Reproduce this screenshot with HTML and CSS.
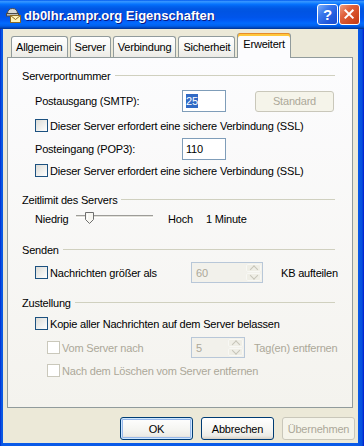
FILE: index.html
```html
<!DOCTYPE html>
<html lang="de">
<head>
<meta charset="utf-8">
<title>db0lhr.ampr.org Eigenschaften</title>
<link rel="stylesheet" href="styles.css">
</head>
<body>
<div class="window">
  <div class="titlebar">
    <svg class="ticon" viewBox="0 0 16 16" width="16" height="16">
      <path d="M2.5 7 Q2.5 1.5 7.5 1.5 Q12.5 1.5 12.5 7 Z" fill="#d9d9d4" stroke="#4a4a4a"/>
      <rect x="1.5" y="6.5" width="12" height="2.5" fill="#bdbdb6" stroke="#4a4a4a"/>
      <rect x="5.5" y="8.5" width="10" height="7" fill="#fff3b8" stroke="#8a6a24"/>
      <path d="M5.5 8.5 L10.5 12.5 L15.5 8.5" fill="none" stroke="#8a6a24"/>
    </svg>
    <span class="title">db0lhr.ampr.org Eigenschaften</span>
    <div class="tbtns">
      <span class="tbtn help">?</span>
      <span class="tbtn close"><svg viewBox="0 0 21 21" width="19" height="19"><path d="M6 6 L14 14 M14 6 L6 14" stroke="#fff" stroke-width="2.2" stroke-linecap="square"/></svg></span>
    </div>
  </div>
  <div class="client">
    <div class="tabs">
      <span class="tab">Allgemein</span>
      <span class="tab">Server</span>
      <span class="tab">Verbindung</span>
      <span class="tab">Sicherheit</span>
      <span class="tab active">Erweitert</span>
    </div>
    <div class="panel">
      <div class="ghead"><span>Serverportnummer</span><i></i></div>
      <div class="row ind r-smtp">
        <span class="lbl">Postausgang (SMTP):</span>
        <span class="edit"><span class="sel">25</span></span>
        <span class="btn std dis">Standard</span>
      </div>
      <div class="chk ind r-chk1"><span class="box"></span><span>Dieser Server erfordert eine sichere Verbindung (SSL)</span></div>
      <div class="row ind r-pop">
        <span class="lbl">Posteingang (POP3):</span>
        <span class="edit">110</span>
      </div>
      <div class="chk ind r-chk2"><span class="box"></span><span>Dieser Server erfordert eine sichere Verbindung (SSL)</span></div>

      <div class="ghead r-g2"><span>Zeitlimit des Servers</span><i></i></div>
      <div class="row ind r-slider">
        <span class="slbl">Niedrig</span>
        <span class="slider"><span class="track"></span>
          <svg class="thumb" viewBox="0 0 10 12" width="10" height="12"><path d="M0.5 0.5 H8.5 V7.5 L4.5 11.5 L0.5 7.5 Z" fill="#f7f6f1" stroke="#6f6f6f"/><path d="M2.5 2 V7.5" stroke="#fff"/></svg>
        </span>
        <span class="hoch">Hoch</span>
        <span>1 Minute</span>
      </div>

      <div class="ghead r-g3"><span>Senden</span><i></i></div>
      <div class="row ind r-send">
        <span class="chk w-send"><span class="box"></span><span>Nachrichten größer als</span></span>
        <span class="spin w60"><span class="val">60</span><span class="arrows"><span class="ar up"></span><span class="ar dn"></span></span></span>
        <span class="kb">KB aufteilen</span>
      </div>

      <div class="ghead r-g4"><span>Zustellung</span><i></i></div>
      <div class="chk ind r-kopie"><span class="box"></span><span>Kopie aller Nachrichten auf dem Server belassen</span></div>
      <div class="row ind2 r-vom dis">
        <span class="chk w-vom"><span class="box"></span><span>Vom Server nach</span></span>
        <span class="spin w5"><span class="val">5</span><span class="arrows"><span class="ar up"></span><span class="ar dn"></span></span></span>
        <span class="tag">Tag(en) entfernen</span>
      </div>
      <div class="chk ind2 r-nach dis"><span class="box"></span><span>Nach dem Löschen vom Server entfernen</span></div>
    </div>
    <div class="buttons">
      <span class="btn def">OK</span>
      <span class="btn">Abbrechen</span>
      <span class="btn dis">Übernehmen</span>
    </div>
  </div>
</div>
</body>
</html>
```

FILE: styles.css
```css
* { box-sizing: border-box; }
html, body { margin: 0; padding: 0; }
body {
  width: 364px;
  height: 446px;
  overflow: hidden;
  background: #0054e3;
  font-family: "Liberation Sans", Arial, sans-serif;
  font-size: 11px;
  letter-spacing: -0.2px;
  color: #000;
  white-space: nowrap;
}
.window {
  width: 364px;
  height: 446px;
  display: flex;
  flex-direction: column;
  background: linear-gradient(90deg, #0019cf 0, #0855dd 1px, #0a5ae8 3px, #0a5ae8 358px, #0550dd 362px, #0019cf 364px);
}
.titlebar {
  flex: none;
  height: 29px;
  display: flex;
  align-items: center;
  padding: 0 4px 0 5px;
  background: linear-gradient(#0058ee 0%, #3593ff 5%, #288eff 8%, #127dff 12%, #036ffc 16%, #0262ee 22%, #0057e5 30%, #0054e3 40%, #0055eb 60%, #005bf5 70%, #026afe 80%, #0062ef 88%, #0052d6 93%, #0040ab 97%, #003092 100%);
  color: #fff;
}
.ticon { flex: none; margin-right: 3px; margin-top: 1px; }
.title {
  flex: 1;
  font: bold 13px "Liberation Sans", Arial, sans-serif;
  letter-spacing: 0;
  text-shadow: 1px 1px 0 #0a1883;
  padding-top: 1px;
}
.tbtns { display: flex; gap: 1px; }
.tbtn {
  width: 21px;
  height: 21px;
  border: 1px solid #fff;
  border-radius: 3px;
  display: flex;
  align-items: center;
  justify-content: center;
  color: #fff;
}
.help {
  background: linear-gradient(135deg, #7fb0fa 0%, #3a78ec 35%, #2259dc 70%, #1c4fd0 100%);
  font: bold 15px "Liberation Sans", Arial, sans-serif;
  letter-spacing: 0;
}
.close {
  background: linear-gradient(135deg, #f0a085 0%, #e0623d 35%, #d24a22 70%, #c13a16 100%);
}

.client {
  flex: 1;
  margin: 0 6px 3px 3px;
  background: #ece9d8;
  display: flex;
  flex-direction: column;
}
.tabs {
  height: 28px;
  display: flex;
  align-items: flex-end;
  padding: 4px 0 0 8px;
  gap: 2px;
}
.tab {
  height: 21px;
  padding: 0 4px;
  border: 1px solid #919b9c;
  border-bottom: none;
  border-radius: 3px 3px 0 0;
  background: linear-gradient(#ffffff, #f7f7f4 50%, #ecebe6);
  display: flex;
  align-items: center;
  justify-content: center;
}
.tab.active {
  position: relative;
  z-index: 1;
  height: 25px;
  margin-bottom: -1px;
  padding: 0 5px 3px;
  background: #fcfcfe;
  border-top: none;
  box-shadow: inset 0 1px 0 #e68b2c, inset 0 3px 0 #ffc73c;
  border-radius: 3px 3px 0 0;
}
.panel {
  height: 351px;
  margin: 0 5px 0 4px;
  border: 1px solid #919b9c;
  background: linear-gradient(#fcfcfe, #f4f3ee);
  padding: 11px 17px 0 14px;
}
.ghead {
  display: flex;
  align-items: center;
  height: 13px;
}
.ghead i {
  flex: 1;
  height: 1px;
  background: #d0d0bf;
  margin-left: 4px;
}
.ind { margin-left: 13px; }
.ind2 { margin-left: 25px; }
.row {
  display: flex;
  align-items: center;
}
.row > * { flex: none; }
.chk {
  display: flex;
  align-items: center;
  height: 13px;
}
.box {
  flex: none;
  width: 13px;
  height: 13px;
  border: 1px solid #1c5180;
  background: linear-gradient(135deg, #dcdcd7, #ffffff);
  margin-right: 2px;
}
.dis { color: #aca899; }
.dis .box {
  border-color: #cac8bb;
  background: #ffffff;
}
.lbl { width: 147px; }
.edit {
  width: 44px;
  height: 22px;
  border: 1px solid #7f9db9;
  background: #fff;
  padding: 0 3px;
  display: flex;
  align-items: center;
}
.sel { background: #316ac5; color: #fff; line-height: 14px; }
.btn {
  width: 73px;
  height: 23px;
  border: 1px solid #003c74;
  border-radius: 3px;
  background: linear-gradient(#ffffff, #f4f4f0 60%, #ecebe6 85%, #d6d0c5);
  display: flex;
  align-items: center;
  justify-content: center;
}
.btn.dis {
  border-color: #c9c7ba;
  background: #f5f4ea;
}
.btn.def {
  box-shadow: inset 0 0 0 1px #cee7ff, inset 0 0 0 2px #98b8ea;
}
.btn.std {
  width: 79px;
  height: 21px;
  margin-left: 29px;
}

.r-smtp { height: 22px; margin-top: 8px; }
.r-chk1 { margin-top: 7px; }
.r-pop { height: 22px; margin-top: 6px; }
.r-chk2 { margin-top: 4px; }
.r-g2 { margin-top: 16px; }
.r-slider { height: 14px; margin-top: 6px; }
.r-g3 { margin-top: 17px; }
.r-send { height: 21px; margin-top: 6px; }
.r-g4 { margin-top: 13px; }
.r-kopie { margin-top: 8px; }
.r-vom { height: 21px; margin-top: 7px; }
.r-nach { margin-top: 6px; }

.slbl { width: 41px; }
.slider {
  position: relative;
  width: 77px;
  height: 14px;
}
.track {
  display: block;
  margin-top: 3px;
  height: 3px;
  border-top: 1px solid #9d9c99;
  border-bottom: 1px solid #ffffff;
  background: #e2e1da;
}
.thumb {
  position: absolute;
  left: 9px;
  top: 0;
}
.hoch { margin-left: 15px; width: 38px; }

.w-send { width: 156px; }
.w-vom { width: 144px; }
.spin {
  height: 21px;
  border: 1px solid #b8c7d8;
  background: #f2f1eb;
  display: flex;
  padding: 1px;
  color: #aca899;
}
.w60 { width: 72px; }
.w5 { width: 54px; }
.val { flex: 1; padding-left: 3px; display: flex; align-items: center; }
.arrows {
  width: 15px;
  display: flex;
  flex-direction: column;
  gap: 1px;
}
.ar {
  flex: 1;
  background: #efeee6;
  border: 1px solid #f8f8f4;
  border-radius: 2px;
  display: flex;
  align-items: center;
  justify-content: center;
}
.ar::after {
  content: "";
  width: 5px;
  height: 5px;
  border-left: 1.5px solid #c6c4b8;
  border-top: 1.5px solid #c6c4b8;
}
.up::after { transform: translateY(1.5px) rotate(45deg); }
.dn::after { transform: translateY(-1.5px) rotate(225deg); }
.kb { margin-left: 18px; }
.tag { margin-left: 9px; }

.buttons {
  margin-top: 9px;
  display: flex;
  justify-content: flex-end;
  gap: 8px;
  padding-right: 3px;
}
```
